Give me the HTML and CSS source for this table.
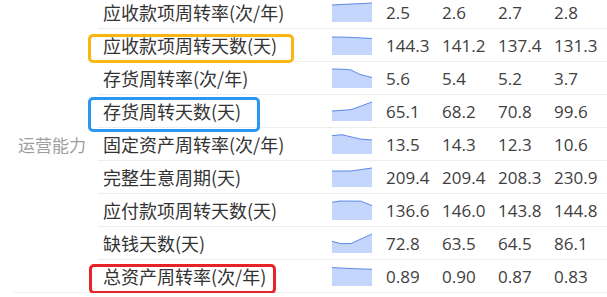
FILE: index.html
```html
<!DOCTYPE html>
<html lang="zh-CN">
<head>
<meta charset="utf-8">
<title>运营能力</title>
<link rel="stylesheet" href="styles.css">
</head>
<body>
<table class="metrics">
  <colgroup>
    <col class="c-group"><col class="c-label"><col class="c-spark">
    <col class="c-num"><col class="c-num"><col class="c-num"><col class="c-last">
  </colgroup>
  <tr>
    <td class="group" rowspan="9">运营能力</td>
    <td class="label">应收款项周转率(次/年)</td>
    <td class="spark"><svg viewBox="0 0 40 20"><path class="area" d="M0,3 L13,2.3 L27,1.7 L40,1 L40,20 L0,20 Z"/><path class="line" d="M0,3 L13,2.3 L27,1.7 L40,1"/></svg></td>
    <td class="num">2.5</td><td class="num">2.6</td><td class="num">2.7</td><td class="num">2.8</td>
  </tr>
  <tr>
    <td class="label">应收款项周转天数(天)<span class="ring ring-orange"></span></td>
    <td class="spark"><svg viewBox="0 0 40 20"><path class="area" d="M0,2 L13,2.2 L27,2.8 L40,3.5 L40,20 L0,20 Z"/><path class="line" d="M0,2 L13,2.2 L27,2.8 L40,3.5"/></svg></td>
    <td class="num">144.3</td><td class="num">141.2</td><td class="num">137.4</td><td class="num">131.3</td>
  </tr>
  <tr>
    <td class="label">存货周转率(次/年)</td>
    <td class="spark"><svg viewBox="0 0 40 20"><path class="area" d="M0,1 L13,1.3 L19,2 L28,6.5 L40,9.5 L40,20 L0,20 Z"/><path class="line" d="M0,1 L13,1.3 L19,2 L28,6.5 L40,9.5"/></svg></td>
    <td class="num">5.6</td><td class="num">5.4</td><td class="num">5.2</td><td class="num">3.7</td>
  </tr>
  <tr>
    <td class="label">存货周转天数(天)<span class="ring ring-blue"></span></td>
    <td class="spark"><svg viewBox="0 0 40 20"><path class="area" d="M0,10 L19,8.7 L40,1 L40,20 L0,20 Z"/><path class="line" d="M0,10 L19,8.7 L40,1"/></svg></td>
    <td class="num">65.1</td><td class="num">68.2</td><td class="num">70.8</td><td class="num">99.6</td>
  </tr>
  <tr>
    <td class="label">固定资产周转率(次/年)</td>
    <td class="spark"><svg viewBox="0 0 40 20"><path class="area" d="M0,1.7 L10,0.7 L28,5 L40,6 L40,20 L0,20 Z"/><path class="line" d="M0,1.7 L10,0.7 L28,5 L40,6"/></svg></td>
    <td class="num">13.5</td><td class="num">14.3</td><td class="num">12.3</td><td class="num">10.6</td>
  </tr>
  <tr>
    <td class="label">完整生意周期(天)</td>
    <td class="spark"><svg viewBox="0 0 40 20"><path class="area" d="M0,4 L19,4 L40,1 L40,20 L0,20 Z"/><path class="line" d="M0,4 L19,4 L40,1"/></svg></td>
    <td class="num">209.4</td><td class="num">209.4</td><td class="num">208.3</td><td class="num">230.9</td>
  </tr>
  <tr>
    <td class="label">应付款项周转天数(天)</td>
    <td class="spark"><svg viewBox="0 0 40 20"><path class="area" d="M0,2.3 L8,1 L29,1.2 L40,5.7 L40,20 L0,20 Z"/><path class="line" d="M0,2.3 L8,1 L29,1.2 L40,5.7"/></svg></td>
    <td class="num">136.6</td><td class="num">146.0</td><td class="num">143.8</td><td class="num">144.8</td>
  </tr>
  <tr>
    <td class="label">缺钱天数(天)</td>
    <td class="spark"><svg viewBox="0 0 40 20"><path class="area" d="M0,8.4 L9,10.7 L19,10.5 L40,1 L40,20 L0,20 Z"/><path class="line" d="M0,8.4 L9,10.7 L19,10.5 L40,1"/></svg></td>
    <td class="num">72.8</td><td class="num">63.5</td><td class="num">64.5</td><td class="num">86.1</td>
  </tr>
  <tr>
    <td class="label">总资产周转率(次/年)<span class="ring ring-red"></span></td>
    <td class="spark"><svg viewBox="0 0 40 20"><path class="area" d="M0,1.6 L20,2.6 L40,3.3 L40,20 L0,20 Z"/><path class="line" d="M0,1.6 L20,2.6 L40,3.3"/></svg></td>
    <td class="num">0.89</td><td class="num">0.90</td><td class="num">0.87</td><td class="num">0.83</td>
  </tr>
</table>
</body>
</html>
```
FILE: styles.css
```css
html, body {
  margin: 0;
  padding: 0;
  background: #ffffff;
}

body {
  overflow: hidden;
  font-family: "Noto Sans CJK SC", "Noto Sans", sans-serif;
  color: #333333;
}

.metrics {
  margin: -4px 0 0 13px;
  width: 594px;
  table-layout: fixed;
  border-collapse: separate;
  border-spacing: 0;
}

.c-group { width: 85px; }
.c-label { width: 226px; }
.c-spark { width: 56px; }
.c-num { width: 56px; }
.c-last { width: 59px; }

.metrics td {
  height: 32px;
  padding: 0;
  border-bottom: 1px solid #eeeeee;
  vertical-align: middle;
  white-space: nowrap;
}

.group {
  padding-left: 5px !important;
  font-size: 17px;
  color: #9e9e9e;
}

.label {
  position: relative;
  padding-left: 5px !important;
  font-size: 18px;
  color: #333333;
  line-height: 32px;
}

.spark svg {
  display: block;
  width: 40px;
  height: 20px;
  margin-left: 8px;
  overflow: visible;
}

.area {
  fill: #c4d6fb;
}

.line {
  fill: none;
  stroke: #5d89ea;
  stroke-width: 1;
}

.num {
  padding-left: 6px !important;
  font-family: "Open Sans", "Noto Sans", sans-serif;
  font-size: 17px;
  color: #404040;
}

.ring {
  position: absolute;
  box-sizing: border-box;
  border: 3px solid;
  border-radius: 5px;
  left: -10px;
}

.ring-orange {
  top: 5px;
  width: 206px;
  height: 29px;
  border-color: #f8b610;
}

.ring-blue {
  top: 2px;
  width: 172px;
  height: 35px;
  border-color: #2b97f0;
}

.ring-red {
  top: 4px;
  left: -9px;
  width: 187px;
  height: 30px;
  border-color: #e62428;
}
```
